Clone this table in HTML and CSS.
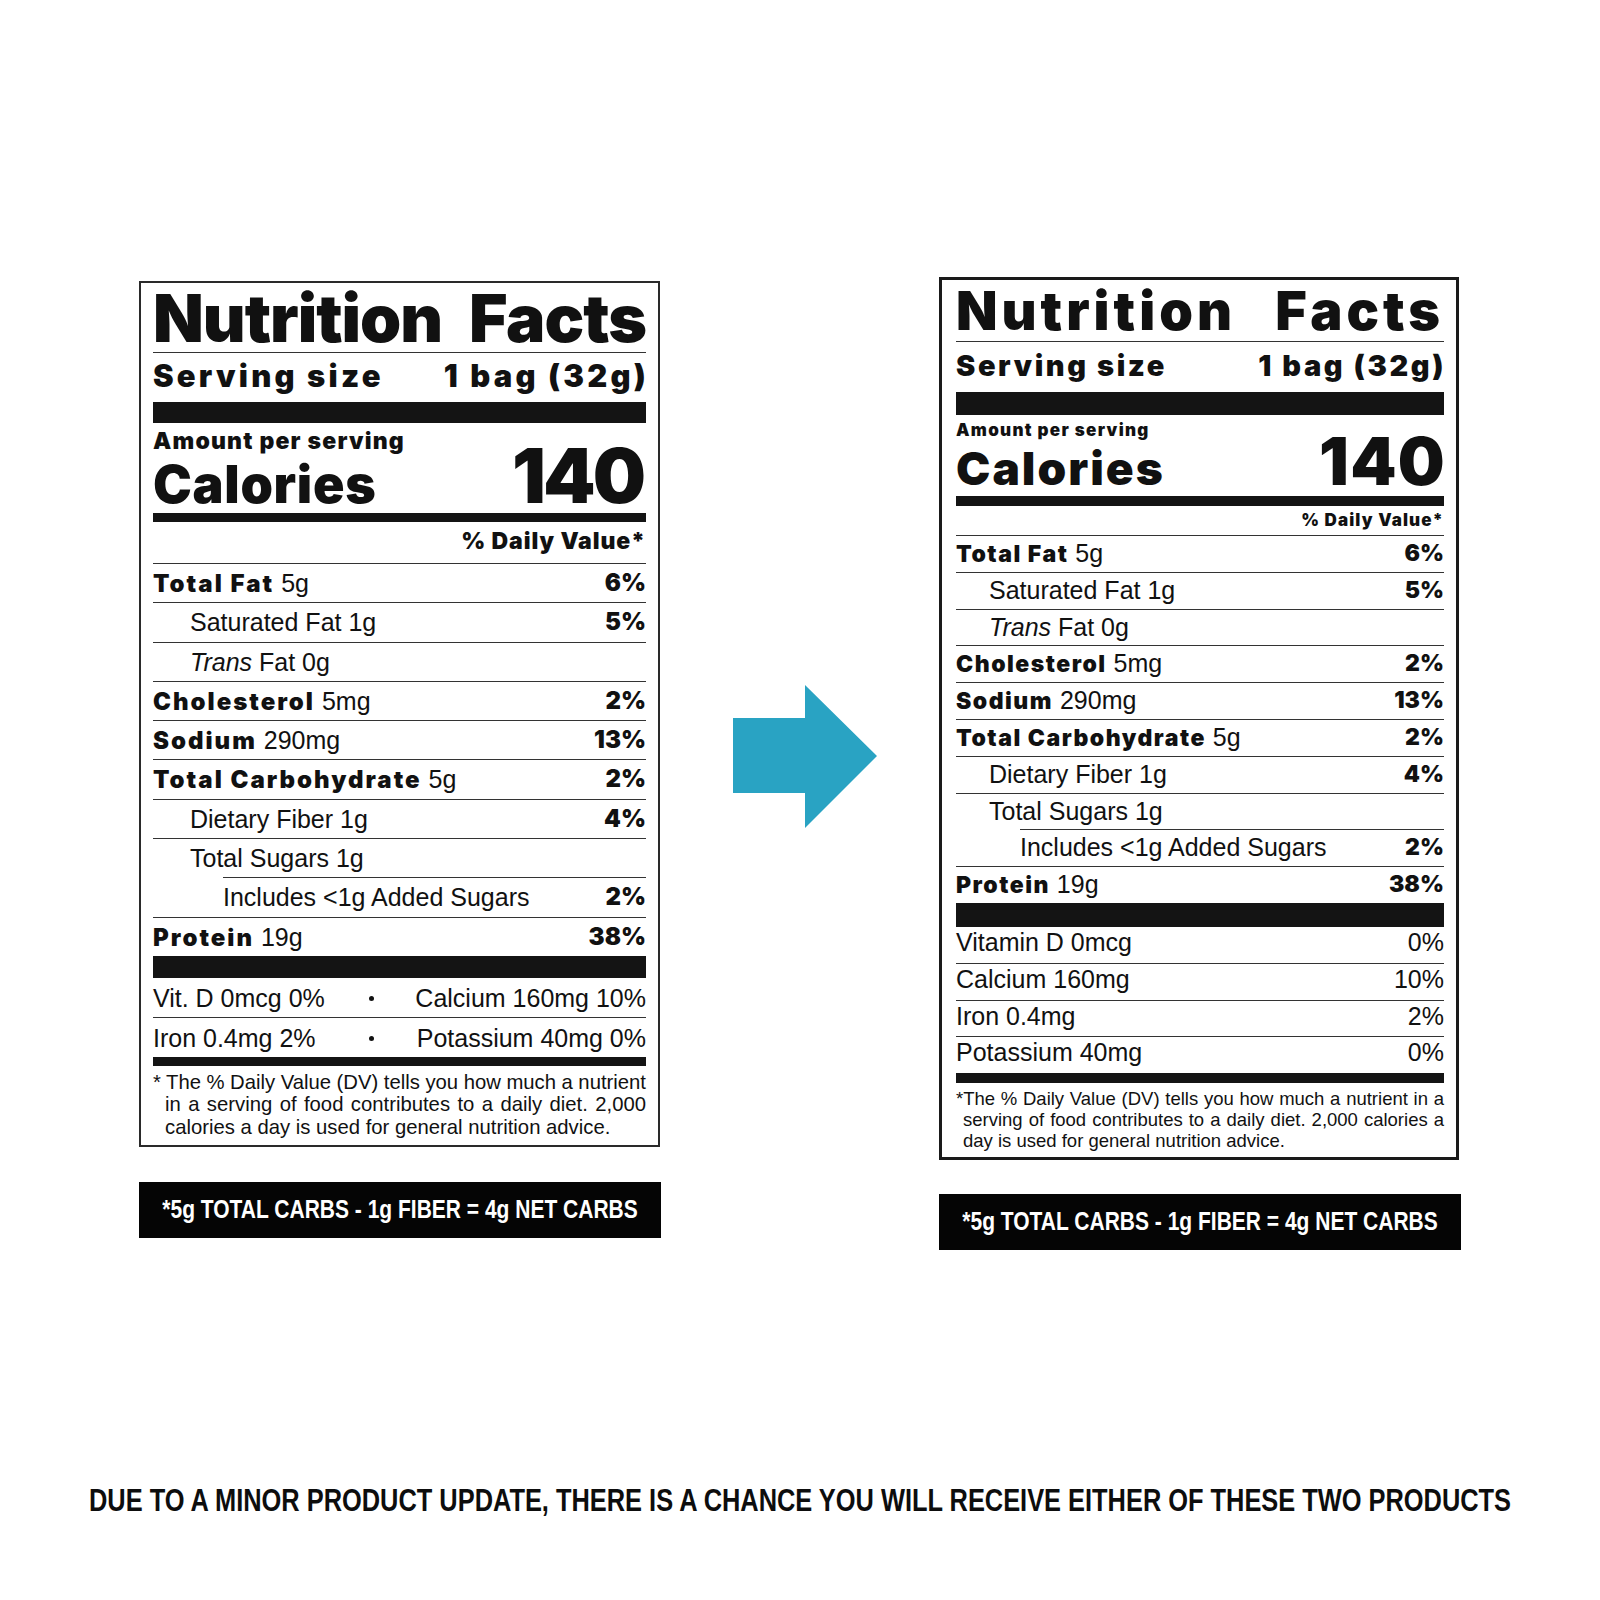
FILE: index.html
```html
<!DOCTYPE html>
<html lang="en">
<head>
<meta charset="utf-8">
<title>Nutrition Facts update</title>
<link rel="stylesheet" href="styles.css">
</head>
<body>
<main class="page">
  <div class="cols">
    <div class="col col-old">
      <section class="panel old">
        <div class="title"><span>Nutrition</span><span>Facts</span></div>
        <div class="serving"><span>Serving size</span><span>1 bag (32g)</span></div>
        <div class="bar bar-top"></div>
        <div class="amount">Amount per serving</div>
        <div class="calories"><span class="cal-label">Calories</span><span class="cal-value">140</span></div>
        <div class="bar bar-mid"></div>
        <div class="dv-head">% Daily Value*</div>
        <div class="row"><span><b>Total Fat</b> 5g</span><b>6%</b></div>
        <div class="row sub"><span>Saturated Fat 1g</span><b>5%</b></div>
        <div class="row sub"><span><i>Trans</i> Fat 0g</span></div>
        <div class="row"><span><b>Cholesterol</b> 5mg</span><b>2%</b></div>
        <div class="row"><span><b>Sodium</b> 290mg</span><b>13%</b></div>
        <div class="row"><span><b>Total Carbohydrate</b> 5g</span><b>2%</b></div>
        <div class="row sub"><span>Dietary Fiber 1g</span><b>4%</b></div>
        <div class="row sub"><span>Total Sugars 1g</span></div>
        <div class="row subsub"><span>Includes &lt;1g Added Sugars</span><b>2%</b></div>
        <div class="row"><span><b>Protein</b> 19g</span><b>38%</b></div>
        <div class="bar bar-low"></div>
        <div class="vit"><span>Vit. D 0mcg 0%</span><span class="dot"></span><span class="vr">Calcium 160mg 10%</span></div>
        <div class="vit"><span>Iron 0.4mg 2%</span><span class="dot"></span><span class="vr">Potassium 40mg 0%</span></div>
        <div class="bar bar-end"></div>
        <p class="foot">
          <span class="ln first">* The % Daily Value (DV) tells you how much a nutrient</span>
          <span class="ln">in a serving of food contributes to a daily diet. 2,000</span>
          <span class="ln last">calories a day is used for general nutrition advice.</span>
        </p>
      </section>
      <div class="carbs"><span class="squeeze">*5g TOTAL CARBS - 1g FIBER = 4g NET CARBS</span></div>
    </div>

    <svg class="arrow" viewBox="0 0 144 143" width="144" height="143" aria-hidden="true">
      <polygon points="0,33 72,33 72,0 144,71 72,143 72,108 0,108" fill="#29a3c3"/>
    </svg>

    <div class="col col-new">
      <section class="panel new">
        <div class="title"><span>Nutrition</span><span>Facts</span></div>
        <div class="serving"><span>Serving size</span><span>1 bag (32g)</span></div>
        <div class="bar bar-top"></div>
        <div class="amount">Amount per serving</div>
        <div class="calories"><span class="cal-label">Calories</span><span class="cal-value">140</span></div>
        <div class="bar bar-mid"></div>
        <div class="dv-head">% Daily Value*</div>
        <div class="row"><span><b>Total Fat</b> 5g</span><b>6%</b></div>
        <div class="row sub"><span>Saturated Fat 1g</span><b>5%</b></div>
        <div class="row sub"><span><i>Trans</i> Fat 0g</span></div>
        <div class="row"><span><b>Cholesterol</b> 5mg</span><b>2%</b></div>
        <div class="row"><span><b>Sodium</b> 290mg</span><b>13%</b></div>
        <div class="row"><span><b>Total Carbohydrate</b> 5g</span><b>2%</b></div>
        <div class="row sub"><span>Dietary Fiber 1g</span><b>4%</b></div>
        <div class="row sub"><span>Total Sugars 1g</span></div>
        <div class="row subsub"><span>Includes &lt;1g Added Sugars</span><b>2%</b></div>
        <div class="row"><span><b>Protein</b> 19g</span><b>38%</b></div>
        <div class="bar bar-low"></div>
        <div class="vit"><span>Vitamin D 0mcg</span><span>0%</span></div>
        <div class="vit"><span>Calcium 160mg</span><span>10%</span></div>
        <div class="vit"><span>Iron 0.4mg</span><span>2%</span></div>
        <div class="vit"><span>Potassium 40mg</span><span>0%</span></div>
        <div class="bar bar-end"></div>
        <p class="foot">
          <span class="ln first">*The % Daily Value (DV) tells you how much a nutrient in a</span>
          <span class="ln">serving of food contributes to a daily diet. 2,000 calories a</span>
          <span class="ln last">day is used for general nutrition advice.</span>
        </p>
      </section>
      <div class="carbs"><span class="squeeze">*5g TOTAL CARBS - 1g FIBER = 4g NET CARBS</span></div>
    </div>
  </div>
  <div class="notice"><span class="squeeze">DUE TO A MINOR PRODUCT UPDATE, THERE IS A CHANCE YOU WILL RECEIVE EITHER OF THESE TWO PRODUCTS</span></div>
</main>
</body>
</html>
```

FILE: styles.css
```css
html, body {
  margin: 0;
  padding: 0;
  background: #ffffff;
}

.page {
  width: 1600px;
  height: 1600px;
  overflow: hidden;
  font-family: "Liberation Sans", Arial, sans-serif;
  color: #111;
}

.cols {
  display: flex;
  align-items: flex-start;
  padding-left: 139px;
}

.col-old {
  width: 522px;
  margin-top: 281px;
}

.arrow {
  display: block;
  margin-left: 72px;
  margin-top: 685px;
  flex: none;
}

.col-new {
  width: 523px;
  margin-left: 62px;
  margin-top: 277px;
}

/* ---------- panel common ---------- */
.panel {
  box-sizing: border-box;
  color: #111;
}

.panel .title,
.panel .serving,
.panel .amount,
.panel .calories,
.panel .dv-head,
.panel b {
  font-family: "Inter", "Roboto", "DejaVu Sans", sans-serif;
  font-weight: 900;
}

.panel .title,
.panel .serving,
.panel .calories {
  display: flex;
  justify-content: space-between;
}

.panel .title {
  border-bottom: 1px solid #333;
}

.panel .calories {
  align-items: flex-end;
}

.panel .bar {
  background: #141414;
}

.panel .dv-head {
  text-align: right;
}

.panel .row {
  box-sizing: border-box;
  display: flex;
  justify-content: space-between;
  border-top: 1px solid #333;
  white-space: nowrap;
}

.panel i {
  font-style: italic;
}

.panel .foot {
  margin: 0;
}

.panel .foot .ln {
  display: block;
  text-align: justify;
  text-align-last: justify;
  white-space: nowrap;
}

.panel .foot .ln.last {
  text-align-last: left;
}

/* ---------- old (left) panel ---------- */
.old {
  width: 521px;
  border: 2px solid #2a2a2a;
  padding: 2px 12px 6.5px 12px;
}

.old .title {
  font-size: 66px;
  line-height: 67px;
  letter-spacing: -1px;
}

.old .serving {
  font-size: 31px;
  line-height: 46px;
  letter-spacing: 3.2px;
}

.old .serving span:last-child {
  margin-right: -3px;
}

.old .bar-top {
  margin-top: 3px;
  height: 21px;
}

.old .amount {
  font-size: 23px;
  line-height: 36px;
  letter-spacing: 1.2px;
}

.old .calories {
  height: 54px;
}

.old .cal-label {
  font-size: 52px;
  line-height: 57px;
  letter-spacing: 0.7px;
}

.old .cal-value {
  font-size: 75px;
  line-height: 74px;
  letter-spacing: -3px;
  margin-right: 3px;
}

.old .bar-mid {
  height: 9px;
}

.old .dv-head {
  font-size: 23px;
  line-height: 38px;
  height: 41px;
  letter-spacing: 0.9px;
}

.old .row {
  height: 39.3px;
  line-height: 38px;
  font-size: 25px;
}

.old .row b {
  font-size: 24px;
}

.old .row span b {
  letter-spacing: 2px;
}

.old .row.sub {
  padding-left: 37px;
}

.old .row.subsub {
  margin-left: 70px;
}

.old .bar-low {
  height: 22px;
}

.old .vit {
  box-sizing: border-box;
  display: grid;
  grid-template-columns: 208px 20px 1fr;
  align-items: center;
  height: 39.5px;
  line-height: 38px;
  font-size: 25px;
  white-space: nowrap;
}

.old .vit + .vit {
  border-top: 1px solid #333;
}

.old .vit .dot {
  justify-self: center;
  width: 5px;
  height: 5px;
  border-radius: 50%;
  background: #111;
  margin-top: 2px;
}

.old .vit .vr {
  text-align: right;
}

.old .bar-end {
  height: 9px;
}

.old .foot {
  margin-top: 5px;
  font-size: 20.3px;
  line-height: 22.5px;
  padding-left: 12px;
}

.old .foot .first {
  text-indent: -12px;
  word-spacing: -1px;
}

/* ---------- new (right) panel ---------- */
.new {
  width: 520px;
  border: 3px solid #1a1a1a;
  padding: 1px 12px 5.5px 14px;
}

.new .title {
  font-size: 54px;
  line-height: 60px;
  letter-spacing: 4px;
}

.new .serving {
  font-size: 29px;
  line-height: 47px;
  letter-spacing: 2.6px;
}

.new .serving span:last-child {
  margin-right: -2px;
}

.new .bar-top {
  margin-top: 3px;
  height: 23px;
}

.new .amount {
  font-size: 17px;
  line-height: 30px;
  letter-spacing: 1.3px;
}

.new .calories {
  height: 51px;
}

.new .cal-label {
  font-size: 46px;
  line-height: 55.4px;
  letter-spacing: 2px;
}

.new .cal-value {
  font-size: 66px;
  line-height: 70px;
  letter-spacing: 1.3px;
  margin-right: -2px;
}

.new .bar-mid {
  height: 10px;
}

.new .dv-head {
  font-size: 17px;
  line-height: 29px;
  height: 29px;
  letter-spacing: 1.1px;
}

.new .row {
  height: 36.8px;
  line-height: 35.8px;
  font-size: 25px;
}

.new .row b {
  font-size: 23px;
}

.new .row span b {
  letter-spacing: 1.5px;
}

.new .row.sub {
  padding-left: 33px;
}

.new .row.subsub {
  margin-left: 64px;
}

.new .bar-low {
  height: 24px;
}

.new .vit {
  box-sizing: border-box;
  display: flex;
  justify-content: space-between;
  height: 36.5px;
  line-height: 30px;
  font-size: 25px;
}

.new .vit + .vit {
  border-top: 1px solid #333;
}

.new .bar-end {
  height: 10px;
}

.new .foot {
  margin-top: 5.5px;
  font-size: 18.5px;
  line-height: 21px;
  padding-left: 7px;
}

.new .foot .first {
  text-indent: -7px;
}

/* ---------- condensed lines ---------- */
.squeeze {
  display: inline-block;
  flex: none;
  white-space: nowrap;
}

/* ---------- carbs box ---------- */
.carbs {
  height: 56px;
  background: #050505;
  color: #fff;
  display: flex;
  align-items: center;
  justify-content: center;
  font-family: "Liberation Sans", Arial, sans-serif;
  font-weight: 700;
  font-size: 25px;
  white-space: nowrap;
}

.carbs .squeeze {
  transform: scaleX(0.84);
}

.col-old .carbs {
  margin-top: 35px;
}

.col-new .carbs {
  margin-top: 34px;
  width: 522px;
}

/* ---------- bottom notice ---------- */
.notice {
  margin-top: 234px;
  display: flex;
  justify-content: center;
  font-family: "Liberation Sans", Arial, sans-serif;
  font-weight: 700;
  font-size: 32px;
  line-height: 32px;
  color: #0d0d0d;
}

.notice .squeeze {
  transform: scaleX(0.7935);
}
```
